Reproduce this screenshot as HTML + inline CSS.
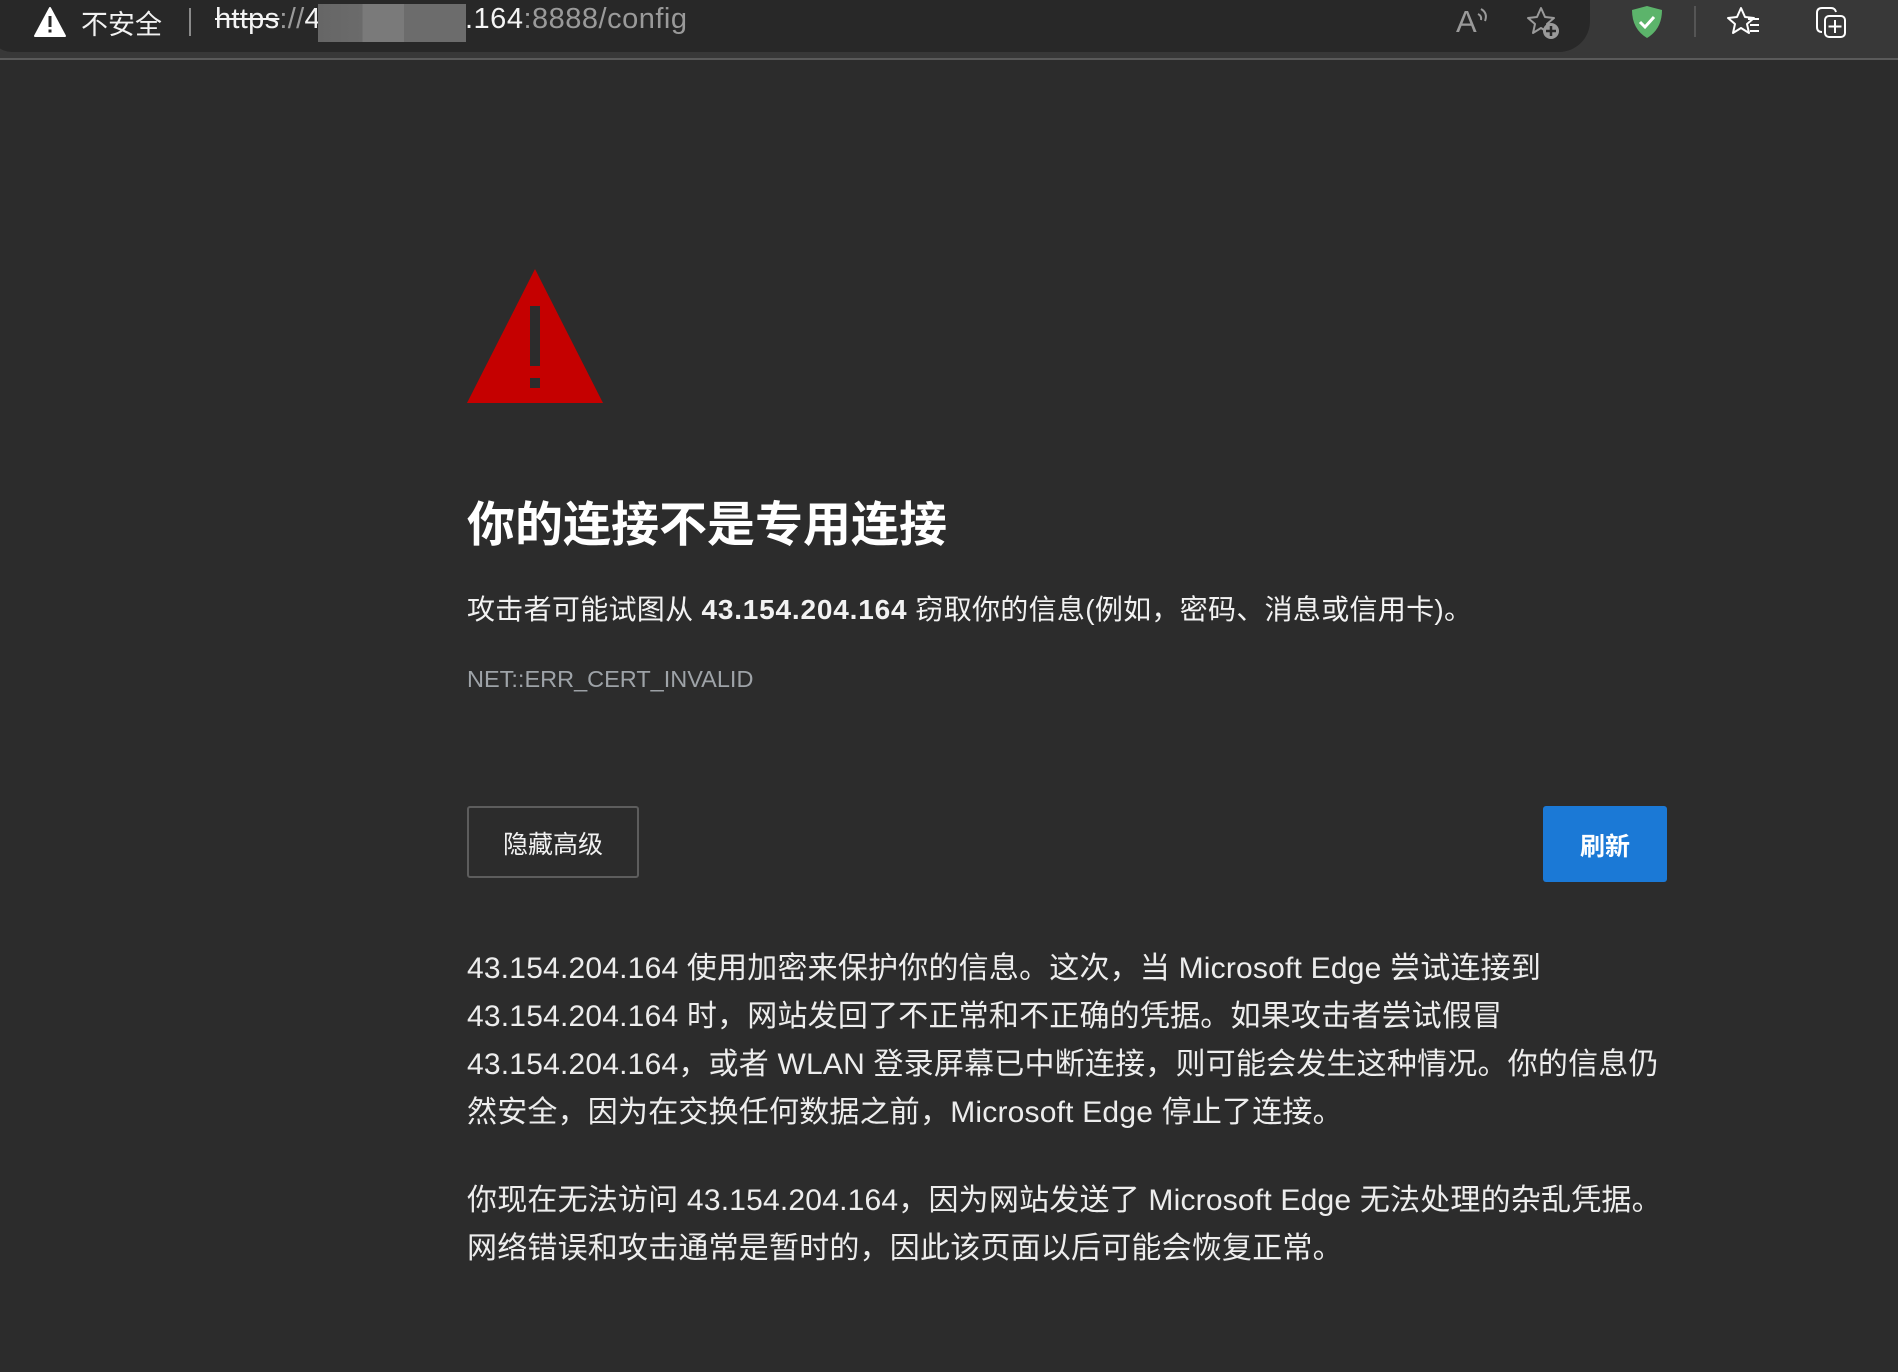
<!DOCTYPE html>
<html><head><meta charset="utf-8">
<style>
*{margin:0;padding:0;box-sizing:border-box}
html,body{width:1898px;height:1372px;overflow:hidden;background:#2c2c2c;font-family:"Liberation Sans","Noto Sans CJK SC",sans-serif;color:#ececec}
#bar{position:absolute;left:0;top:0;width:1898px;height:60px;background:#383838;border-bottom:2px solid #5a5a5a}
#pill{position:absolute;left:-10px;top:-10px;width:1600px;height:62px;background:#282828;border-radius:0 0 31px 31px / 0 0 31px 31px;border-bottom-left-radius:22px}
.a{position:absolute}
.t{position:absolute;white-space:nowrap}
.p{position:absolute;left:467px;font-size:30px;line-height:48px;white-space:nowrap;color:#ededed;letter-spacing:0.2px}
</style></head><body>
<div id="bar">
 <div id="pill"></div>
 <svg class="a" style="left:33px;top:6px" width="34" height="32" viewBox="0 0 34 32"><path d="M17 2 L32 30 L2 30 Z" fill="#fff" stroke="#fff" stroke-width="2" stroke-linejoin="round"/><rect x="15.5" y="10" width="3" height="11" fill="#282828"/><rect x="15.5" y="23.5" width="3" height="3" fill="#282828"/></svg>
 <div class="t" style="left:81px;top:3px;font-size:27px;color:#f2f2f2">不安全</div>
 <div class="a" style="left:189px;top:8px;width:2px;height:28px;background:#8a8a8a"></div>
 <div class="t" style="left:215px;top:3px;font-size:29px;color:#f4f4f4;letter-spacing:0.3px"><span style="text-decoration:line-through">https</span><span style="color:#9a9a9a">://</span>4</div>
 <div class="a" style="left:318px;top:4px;width:148px;height:38px;background:linear-gradient(90deg,#666 0,#6b6b6b 30%,#7a7a7a 30%,#7a7a7a 58%,#6c6c6c 58%);"></div>
 <div class="t" style="left:465px;top:3px;font-size:29px;color:#f4f4f4;letter-spacing:0.5px">.164<span style="color:#9a9a9a">:8888/config</span></div>
 <div class="t" style="left:1456px;top:4px;font-size:31px;color:#9a9a9a;font-weight:300">A</div>
 <svg class="a" style="left:1476px;top:6px" width="16" height="18" viewBox="0 0 16 18"><path d="M2 8 Q6 10 5 14 M5 3 Q12 7 9 15" fill="none" stroke="#9a9a9a" stroke-width="2"/></svg>
 <svg class="a" style="left:1526px;top:6px" width="36" height="34" viewBox="0 0 36 34"><path d="M15 2 L19 11 L28 12 L21 18 L23 27 L15 22 L7 27 L9 18 L2 12 L11 11 Z" fill="none" stroke="#9a9a9a" stroke-width="2" stroke-linejoin="round"/><circle cx="25" cy="25" r="8" fill="#9a9a9a"/><path d="M25 20v10M20 25h10" stroke="#282828" stroke-width="2.5"/></svg>
 <svg class="a" style="left:1630px;top:5px" width="34" height="34" viewBox="0 0 34 34"><path d="M2 5 L17 1 L32 5 Q32 24 17 33 Q2 24 2 5Z" fill="#5cb46b"/><path d="M10 17 L15 22 L24 12" fill="none" stroke="#fff" stroke-width="3"/></svg>
 <div class="a" style="left:1694px;top:6px;width:2px;height:31px;background:#555"></div>
 <svg class="a" style="left:1726px;top:6px" width="36" height="32" viewBox="0 0 36 32"><path d="M15 2 L19 11 L28 12 L21 18 L23 27 L15 22 L7 27 L9 18 L2 12 L11 11 Z" fill="none" stroke="#fff" stroke-width="2" stroke-linejoin="round"/><path d="M22 13h11M24 19h9M24 25h9" stroke="#fff" stroke-width="2"/></svg>
 <svg class="a" style="left:1814px;top:5px" width="36" height="34" viewBox="0 0 36 34"><path d="M8 27 Q3 27 3 22 V8 Q3 3 8 3 H17 Q21 3 22 7" fill="none" stroke="#fff" stroke-width="2"/><rect x="11" y="11" width="20" height="21" rx="4" fill="none" stroke="#fff" stroke-width="2"/><path d="M21 15v13M14.5 21.5h13" stroke="#fff" stroke-width="2"/></svg>
</div>

<svg class="a" style="left:467px;top:269px" width="136" height="134" viewBox="0 0 136 134"><path d="M68 0 L136 134 L0 134 Z" fill="#c50000"/><rect x="63" y="37" width="10" height="60" fill="#2c2c2c"/><rect x="63" y="109" width="10" height="10" fill="#2c2c2c"/></svg>

<div class="t" style="left:467px;top:485px;font-size:48px;font-weight:bold;color:#fff">你的连接不是专用连接</div>
<div class="t" style="left:467px;top:588px;font-size:28px;color:#f2f2f2;letter-spacing:0.3px">攻击者可能试图从 <b style="letter-spacing:0.8px">43.154.204.164</b> 窃取你的信息(例如，密码、消息或信用卡)。</div>
<div class="t" style="left:467px;top:666px;font-size:23.5px;color:#9ea3a8">NET::ERR_CERT_INVALID</div>

<div class="a" style="left:467px;top:806px;width:172px;height:72px;border:2px solid #5d5d5d;border-radius:3px;"></div>
<div class="t" style="left:467px;top:825px;width:172px;text-align:center;font-size:25px;color:#f2f2f2">隐藏高级</div>
<div class="a" style="left:1543px;top:806px;width:124px;height:76px;background:#1b79d6;border-radius:3px;"></div>
<div class="t" style="left:1543px;top:827px;width:124px;text-align:center;font-size:25px;font-weight:bold;color:#fff">刷新</div>

<div class="p" style="top:945px">43.154.204.164 使用加密来保护你的信息。这次，当 Microsoft Edge 尝试连接到</div>
<div class="p" style="top:993px">43.154.204.164 时，网站发回了不正常和不正确的凭据。如果攻击者尝试假冒</div>
<div class="p" style="top:1041px">43.154.204.164，或者 WLAN 登录屏幕已中断连接，则可能会发生这种情况。你的信息仍</div>
<div class="p" style="top:1089px">然安全，因为在交换任何数据之前，Microsoft Edge 停止了连接。</div>
<div class="p" style="top:1177px">你现在无法访问 43.154.204.164，因为网站发送了 Microsoft Edge 无法处理的杂乱凭据。</div>
<div class="p" style="top:1225px">网络错误和攻击通常是暂时的，因此该页面以后可能会恢复正常。</div>
</body></html>
